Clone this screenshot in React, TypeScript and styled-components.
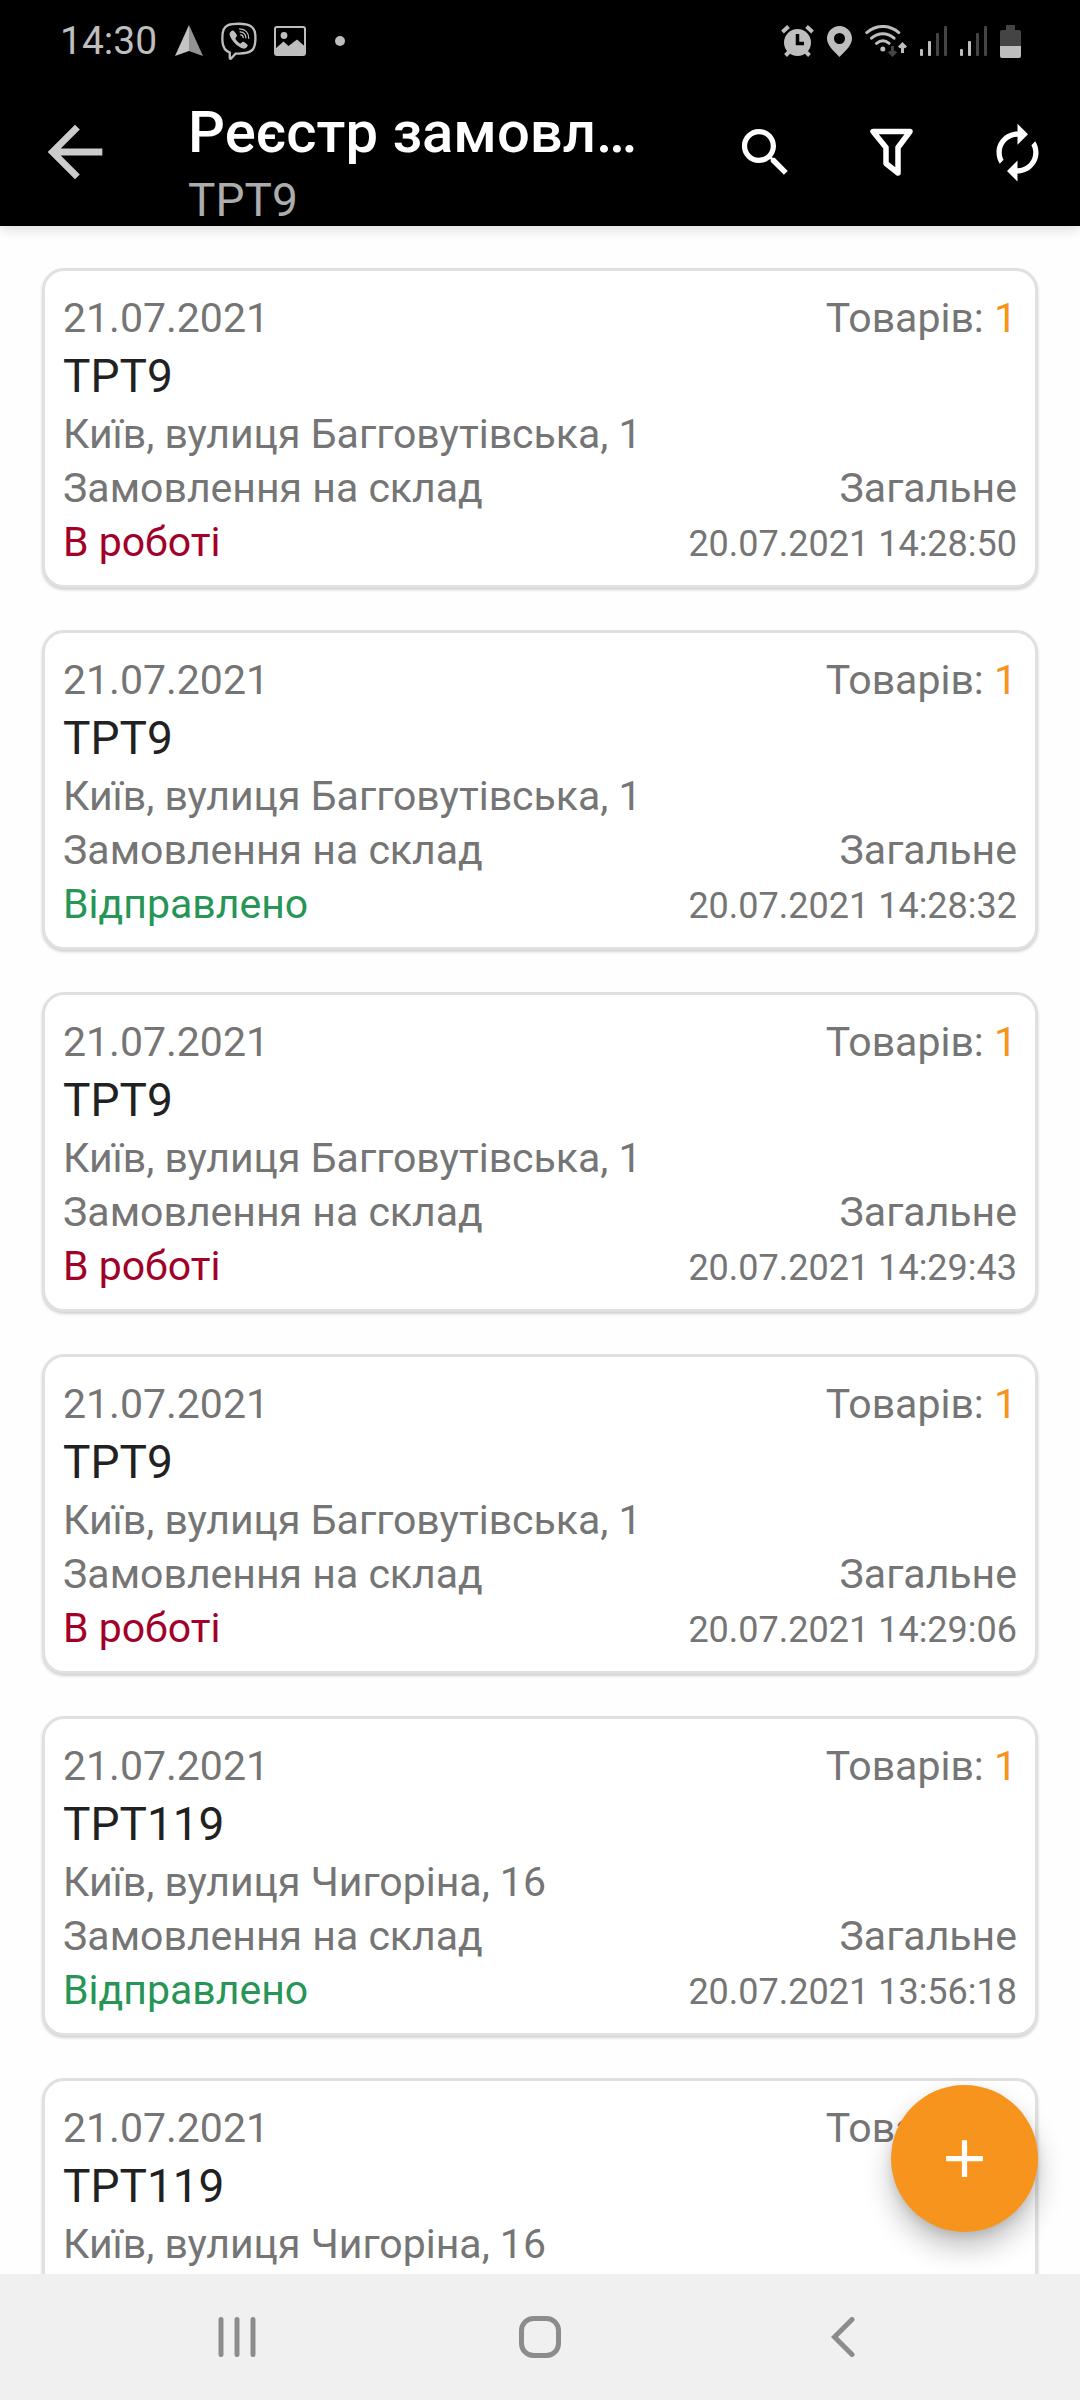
import React from 'react';
import styled, { createGlobalStyle } from 'styled-components';

const color = {
  bar: '#000000',
  barIcon: '#bebebe',
  barIconDim: '#444444',
  page: '#fefefe',
  card: '#ffffff',
  border: '#e0e0e0',
  text: '#757575',
  title: '#212121',
  accent: '#f7941e',
  red: '#a30029',
  green: '#279556',
  nav: '#f0f0f0',
  navIcon: '#8c8c8c',
};

const GlobalStyle = createGlobalStyle`
  *, *::before, *::after { box-sizing: border-box; }
  body {
    margin: 0;
    background: ${color.page};
    font-family: Roboto, 'Noto Sans', sans-serif;
  }
  button {
    padding: 0;
    border: 0;
    background: none;
    color: inherit;
    font: inherit;
    cursor: pointer;
  }
  h1, h2, p, ul { margin: 0; padding: 0; }
  svg { display: block; flex: none; }
`;

const Screen = styled.div`
  display: flex;
  flex-direction: column;
  height: 100vh;
`;

const Header = styled.header`
  position: relative;
  z-index: 1;
  background: ${color.bar};
  box-shadow: 0 3px 12px rgba(0, 0, 0, 0.14);
`;

const StatusBar = styled.div`
  display: flex;
  align-items: center;
  justify-content: space-between;
  height: 78px;
  padding: 4px 59px 0 60px;
  color: ${color.barIcon};
`;

const StatusGroup = styled.div<{ $gap: number }>`
  display: flex;
  align-items: center;
  gap: ${({ $gap }) => $gap}px;
`;

const Clock = styled.time`
  font-size: 39px;
  line-height: 48px;
`;

const Toolbar = styled.div`
  display: flex;
  align-items: center;
  height: 148px;
`;

const ToolButton = styled.button<{ $wide?: boolean }>`
  display: flex;
  flex: none;
  align-items: center;
  justify-content: center;
  width: ${({ $wide }) => ($wide ? 150 : 126)}px;
  height: 126px;
  color: ${({ $wide }) => ($wide ? '#cccccc' : '#ffffff')};
`;

const Heading = styled.div`
  flex: 1;
  align-self: flex-end;
  min-width: 0;
  padding: 0 42px 0 38px;
`;

const HeadTitle = styled.h1`
  overflow: hidden;
  color: #ffffff;
  font-size: 58px;
  font-weight: 500;
  line-height: 84px;
  text-overflow: ellipsis;
  white-space: nowrap;
`;

const HeadSubtitle = styled.p`
  color: #adadad;
  font-size: 46px;
  line-height: 52px;
`;

const Body = styled.main`
  position: relative;
  flex: 1;
  min-height: 0;
`;

const OrderList = styled.ul`
  display: flex;
  flex-direction: column;
  gap: 42px;
  height: 100%;
  padding: 42px;
  overflow-y: auto;
  list-style: none;
  scrollbar-width: none;
`;

const Card = styled.li`
  flex: none;
  padding: 20px 18px 16px;
  border: 3px solid ${color.border};
  border-radius: 22px;
  background: ${color.card};
  box-shadow: 0 2px 3px rgba(0, 0, 0, 0.18);
`;

const Row = styled.div`
  display: flex;
  align-items: baseline;
  justify-content: space-between;
  color: ${color.text};
  font-size: 41px;
  line-height: 54px;
`;

const CardTitle = styled.h2`
  color: ${color.title};
  font-size: 46px;
  font-weight: 400;
  line-height: 62px;
`;

const Count = styled.span`
  color: ${color.accent};
`;

const Status = styled.span<{ $sent: boolean }>`
  color: ${({ $sent }) => ($sent ? color.green : color.red)};
`;

const Stamp = styled.time`
  font-size: 36px;
  line-height: 48px;
`;

const AddButton = styled.button`
  position: absolute;
  right: 42px;
  bottom: 42px;
  display: flex;
  align-items: center;
  justify-content: center;
  width: 147px;
  height: 147px;
  border-radius: 50%;
  background: ${color.accent};
  color: #ffffff;
  box-shadow: 0 16px 28px rgba(0, 0, 0, 0.24), 0 4px 10px rgba(0, 0, 0, 0.1);
`;

const NavBar = styled.nav`
  position: relative;
  display: flex;
  flex: none;
  height: 126px;
  padding: 0 86px;
  background: ${color.nav};
  color: ${color.navIcon};
`;

const NavButton = styled.button`
  display: flex;
  flex: 1;
  align-items: center;
  justify-content: center;
`;

const NavigatorIcon = () => (
  <svg width="30" height="32" viewBox="-1 0 30 32" aria-hidden="true">
    <path d="M14 0 0 31l14-5z" fill="#c4c4c4" />
    <path d="M14 0l14 31-14-5z" fill="#939393" />
  </svg>
);

const ViberIcon = () => (
  <svg width="36" height="38" viewBox="0 0 37 38" fill="none" stroke="currentColor" aria-hidden="true">
    <path
      d="M18 1.300C8 1.300 4.600 3.200 2.700 7.200 1.400 10.500 1.200 15.500 1.600 20.500 2.100 25.500 4.200 29.200 9 31v5.500c0 .8.900 1 1.400.4l4.800-5c7.800.3 14-.4 17.300-4 2.600-3.200 3.200-9 2.700-15.400C34.600 4.200 29.500 1.300 18 1.300z"
      strokeWidth="2.400"
    />
    <path
      d="M12.600 8.200c-1.100-.6-3.900 1.500-3.800 3.600.1 2.700 3.300 7.400 6 10 2.600 2.600 7.200 5.500 9.600 5 1.800-.4 3.500-2.900 2.900-3.900-.8-1.200-3.500-3.100-4.700-3.200-1.200 0-1.500 1.700-2.700 1.800-1.700.1-5-3.700-5-5.200 0-1 1.500-1.500 1.500-2.600 0-1.200-2.500-4.800-3.800-5.500z"
      fill="currentColor"
      stroke="none"
    />
    <path d="M19 6.500c5.800.2 9.400 4 9.500 9.700M19.600 9.600c3.800.3 5.900 2.600 6 6.200M20.200 12.600c1.700.2 2.600 1.100 2.700 2.900" strokeWidth="1.300" strokeLinecap="round" />
  </svg>
);

const PictureIcon = () => (
  <svg width="32" height="30" viewBox="0 0 32 30" aria-hidden="true">
    <rect x="1" y="1" width="30" height="28" rx="2" fill="none" stroke="currentColor" strokeWidth="2" />
    <circle cx="10" cy="9.500" r="3.400" fill="currentColor" />
    <path d="M1 23l8.500-7.500 5 4.500 8.500-6.500L31 20.500V29H1z" fill="currentColor" />
  </svg>
);

const DotIcon = () => (
  <svg width="34" height="10" viewBox="0 0 34 10" aria-hidden="true">
    <circle cx="17" cy="5" r="5" fill="currentColor" />
  </svg>
);

const AlarmIcon = () => (
  <svg width="33" height="32" viewBox="0 0 33 32" aria-hidden="true">
    <g stroke="currentColor" strokeWidth="4" fill="none">
      <path d="M1.500 7l6-5.500M31.500 7l-6-5.500" />
      <path d="M4.500 30.500l5-5M28.500 30.500l-5-5" />
    </g>
    <circle cx="16.500" cy="17.500" r="13.500" fill="currentColor" />
    <path d="M16.500 9v9.500H23" fill="none" stroke={color.bar} strokeWidth="3.500" />
  </svg>
);

const PinIcon = () => (
  <svg width="25" height="31" viewBox="0 0 25 31" aria-hidden="true">
    <path
      d="M12.500 0C5.600 0 0 5.600 0 12.500 0 18.500 5 23.500 12.500 31 20 23.500 25 18.500 25 12.500 25 5.600 19.400 0 12.500 0zm0 7a5.500 5.500 0 1 1 0 11 5.500 5.500 0 0 1 0-11z"
      fill="currentColor"
      fillRule="evenodd"
    />
  </svg>
);

const WifiIcon = () => (
  <svg width="42" height="32" viewBox="0 0 42 32" fill="none" strokeWidth="3" aria-hidden="true">
    <g stroke="currentColor" strokeLinecap="round">
      <path d="M1.800 7.600C11.500-.6 24.500-.6 33.800 7.600" />
      <path d="M6.500 13.200c6.800-5.800 15.800-5.800 22.600 0" />
      <path d="M11.500 18.300c4-3.200 8.800-3.200 12.600 0" />
    </g>
    <circle cx="17.800" cy="24" r="2.500" fill="currentColor" />
    <path d="M27.500 21v9M24 26.500l3.500 3.500 3.500-3.500" stroke={color.barIconDim} />
    <path d="M37.500 28v-9M34 22.500l3.500-3.500 3.500 3.500" stroke="currentColor" />
  </svg>
);

const SignalIcon = () => (
  <svg width="27" height="30" viewBox="0 0 27 30" aria-hidden="true">
    <rect x="0" y="23" width="3" height="7" rx="1" fill="currentColor" />
    <rect x="8" y="15" width="3" height="15" rx="1" fill="currentColor" />
    <rect x="16" y="7" width="3" height="23" rx="1" fill={color.barIconDim} />
    <rect x="24" y="0" width="3" height="30" rx="1" fill={color.barIconDim} />
  </svg>
);

const BatteryIcon = () => (
  <svg width="21" height="33" viewBox="0 0 21 33" aria-hidden="true">
    <path d="M6 0h9v5h4a2 2 0 0 1 2 2v14H0V7a2 2 0 0 1 2-2h4z" fill={color.barIconDim} />
    <path d="M0 21h21v10a2 2 0 0 1-2 2H2a2 2 0 0 1-2-2z" fill="currentColor" />
  </svg>
);

const BackArrowIcon = () => (
  <svg width="82" height="82" viewBox="0 0 24 24" fill="currentColor" aria-hidden="true">
    <path d="M20 11H7.830l5.590-5.590L12 4l-8 8 8 8 1.410-1.410L7.830 13H20v-2z" />
  </svg>
);

const SearchIcon = () => (
  <svg width="63" height="63" viewBox="0 0 24 24" fill="currentColor" aria-hidden="true">
    <path d="M15.500 14h-.79l-.28-.27C15.410 12.590 16 11.110 16 9.500 16 5.910 13.090 3 9.500 3S3 5.910 3 9.500 5.910 16 9.500 16c1.610 0 3.090-.59 4.230-1.570l.27.28v.79l5 4.990L20.490 19l-4.990-5zm-6 0C7.010 14 5 11.990 5 9.500S7.010 5 9.500 5 14 7.010 14 9.500 11.990 14 9.500 14z" />
  </svg>
);

const FilterIcon = () => (
  <svg width="63" height="63" viewBox="0 0 63 63" fill="none" stroke="currentColor" strokeWidth="5.500" strokeLinejoin="round" aria-hidden="true">
    <path d="M13 10.500h37L38 26.500V52L26 42.500v-16z" />
  </svg>
);

const RefreshIcon = () => (
  <svg width="63" height="63" viewBox="0 0 24 24" fill="currentColor" aria-hidden="true">
    <path d="M12 6v3l4-4-4-4v3c-4.420 0-8 3.580-8 8 0 1.570.46 3.030 1.240 4.260L6.700 14.800c-.45-.83-.7-1.790-.7-2.800 0-3.310 2.690-6 6-6zm6.760 1.740L17.300 9.200c.44.84.7 1.790.7 2.800 0 3.310-2.690 6-6 6v-3l-4 4 4 4v-3c4.420 0 8-3.580 8-8 0-1.570-.46-3.030-1.240-4.260z" />
  </svg>
);

const PlusIcon = () => (
  <svg width="63" height="63" viewBox="0 0 24 24" fill="currentColor" aria-hidden="true">
    <path d="M19 13h-6v6h-2v-6H5v-2h6V5h2v6h6v2z" />
  </svg>
);

const RecentsIcon = () => (
  <svg width="38" height="40" viewBox="0 0 38 40" fill="none" stroke="currentColor" strokeWidth="5" strokeLinecap="round" aria-hidden="true">
    <path d="M3 2.500v35M19 2.500v35M35 2.500v35" />
  </svg>
);

const HomeIcon = () => (
  <svg width="42" height="42" viewBox="0 0 42 42" fill="none" stroke="currentColor" strokeWidth="5" aria-hidden="true">
    <rect x="2.500" y="2.500" width="37" height="37" rx="12" />
  </svg>
);

const ChevronIcon = () => (
  <svg width="24" height="40" viewBox="0 0 24 40" fill="none" stroke="currentColor" strokeWidth="5" strokeLinecap="round" aria-hidden="true">
    <path d="M21 2.500L3.500 20 21 37.500" />
  </svg>
);

type Order = {
  id: number;
  date: string;
  shop: string;
  address: string;
  sent: boolean;
  stamp: string;
};

const kyiv9 = { date: '21.07.2021', shop: 'ТРТ9', address: 'Київ, вулиця Багговутівська, 1' };
const kyiv119 = { date: '21.07.2021', shop: 'ТРТ119', address: 'Київ, вулиця Чигоріна, 16' };

const orders: Order[] = [
  { id: 1, ...kyiv9, sent: false, stamp: '20.07.2021 14:28:50' },
  { id: 2, ...kyiv9, sent: true, stamp: '20.07.2021 14:28:32' },
  { id: 3, ...kyiv9, sent: false, stamp: '20.07.2021 14:29:43' },
  { id: 4, ...kyiv9, sent: false, stamp: '20.07.2021 14:29:06' },
  { id: 5, ...kyiv119, sent: true, stamp: '20.07.2021 13:56:18' },
  { id: 6, ...kyiv119, sent: true, stamp: '20.07.2021 13:56:18' },
];

const OrderCard = ({ order }: { order: Order }) => (
  <Card>
    <Row>
      <time>{order.date}</time>
      <span>
        Товарів: <Count>1</Count>
      </span>
    </Row>
    <CardTitle>{order.shop}</CardTitle>
    <Row>
      <span>{order.address}</span>
    </Row>
    <Row>
      <span>Замовлення на склад</span>
      <span>Загальне</span>
    </Row>
    <Row>
      <Status $sent={order.sent}>{order.sent ? 'Відправлено' : 'В роботі'}</Status>
      <Stamp>{order.stamp}</Stamp>
    </Row>
  </Card>
);

export default function App() {
  return (
    <Screen>
      <GlobalStyle />
      <Header>
        <StatusBar>
          <StatusGroup $gap={17}>
            <Clock>14:30</Clock>
            <NavigatorIcon />
            <ViberIcon />
            <PictureIcon />
            <DotIcon />
          </StatusGroup>
          <StatusGroup $gap={13}>
            <AlarmIcon />
            <PinIcon />
            <WifiIcon />
            <SignalIcon />
            <SignalIcon />
            <BatteryIcon />
          </StatusGroup>
        </StatusBar>
        <Toolbar>
          <ToolButton type="button" aria-label="Назад" $wide>
            <BackArrowIcon />
          </ToolButton>
          <Heading>
            <HeadTitle>Реєстр замовлень</HeadTitle>
            <HeadSubtitle>ТРТ9</HeadSubtitle>
          </Heading>
          <ToolButton type="button" aria-label="Пошук">
            <SearchIcon />
          </ToolButton>
          <ToolButton type="button" aria-label="Фільтр">
            <FilterIcon />
          </ToolButton>
          <ToolButton type="button" aria-label="Оновити">
            <RefreshIcon />
          </ToolButton>
        </Toolbar>
      </Header>
      <Body>
        <OrderList>
          {orders.map((order) => (
            <OrderCard key={order.id} order={order} />
          ))}
        </OrderList>
        <AddButton type="button" aria-label="Додати замовлення">
          <PlusIcon />
        </AddButton>
      </Body>
      <NavBar>
        <NavButton type="button" aria-label="Останні програми">
          <RecentsIcon />
        </NavButton>
        <NavButton type="button" aria-label="Головний екран">
          <HomeIcon />
        </NavButton>
        <NavButton type="button" aria-label="Назад">
          <ChevronIcon />
        </NavButton>
      </NavBar>
    </Screen>
  );
}
